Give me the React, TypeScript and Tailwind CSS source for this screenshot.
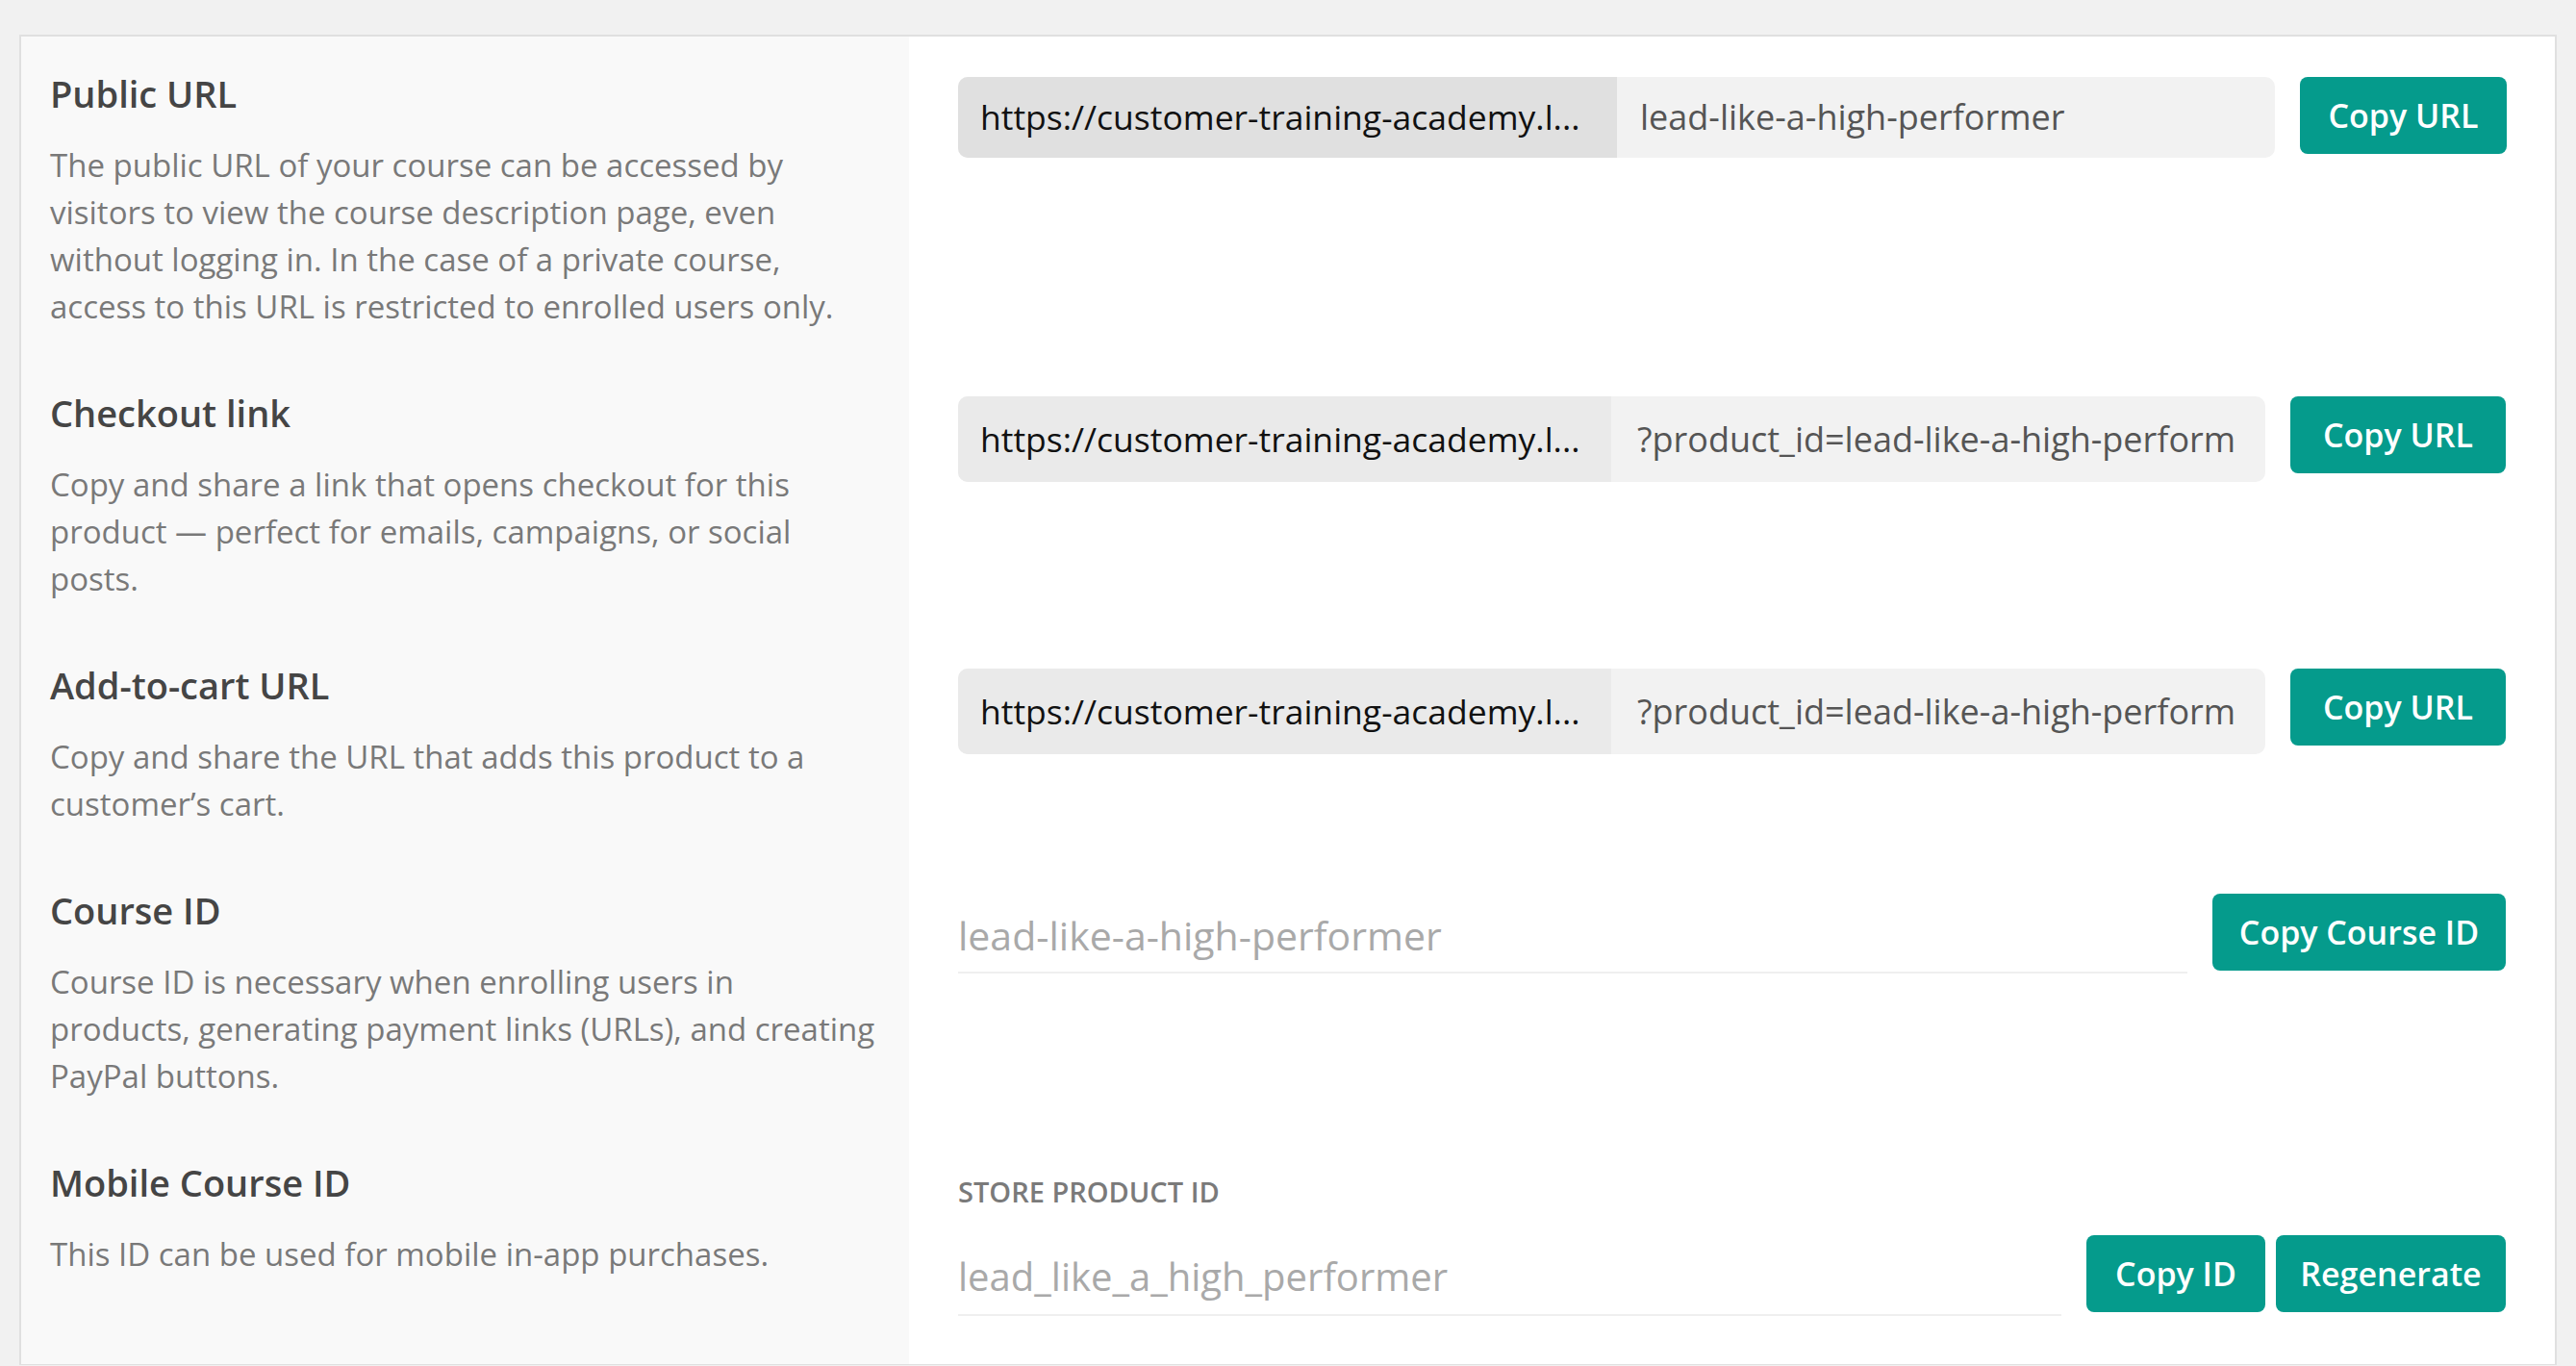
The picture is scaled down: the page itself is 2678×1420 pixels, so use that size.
import React from 'react';

const font = { fontFamily: '"Open Sans", "Noto Sans", sans-serif' };

type SectionProps = {
  title: string;
  lines: string[];
  rightClass: string;
  children: React.ReactNode;
};

const Section: React.FC<SectionProps> = ({ title, lines, rightClass, children }) => (
  <div className="flex">
    <div className="w-[923px] shrink-0 bg-[#f9f9f9] pl-[30px] pr-[24px] pt-[35px] pb-[27px]">
      <h2 className="text-[38px] leading-[48px] font-semibold text-[#454545] mb-[26px] whitespace-nowrap">
        {title}
      </h2>
      <p className="text-[33px] leading-[49px] text-[#797979]">
        {lines.map((line, i) => (
          <span key={i} className="block whitespace-nowrap">
            {line}
          </span>
        ))}
      </p>
    </div>
    <div className={`flex-1 min-w-0 bg-white pl-[51px] pr-[50px] ${rightClass}`}>{children}</div>
  </div>
);

const TealButton: React.FC<{ label: string; width: string }> = ({ label, width }) => (
  <button
    className={`${width} h-[80px] shrink-0 rounded-[8px] bg-[#059b8c] text-white text-[34px] font-semibold leading-none flex items-center justify-center`}
  >
    {label}
  </button>
);

const UrlGroup: React.FC<{
  prefix: string;
  suffix: string;
  prefixBg: string;
  prefixWidth: string;
  height: string;
  suffixPad: string;
}> = ({ prefix, suffix, prefixBg, prefixWidth, height, suffixPad }) => (
  <div className={`flex-1 min-w-0 flex ${height} rounded-[10px] overflow-hidden bg-[#f2f2f2]`}>
    <div
      className={`${prefixWidth} ${prefixBg} shrink-0 flex items-center pl-[23px] pr-[12px] overflow-hidden whitespace-nowrap text-[35.5px] text-[#111111]`}
    >
      {prefix}
    </div>
    <div
      className={`flex-1 min-w-0 flex items-center ${suffixPad} pr-[16px] whitespace-nowrap text-[36px] text-[#555555]`}
    >
      {suffix}
    </div>
  </div>
);

const App: React.FC = () => {
  const base = 'https://customer-training-academy.l...';
  // visible part of the query string, the field is scrolled to its start
  const query = '?product_id=lead-like-a-high-perform';

  return (
    <div className="min-h-screen bg-[#f1f1f1] pt-[36px] px-[20px]" style={font}>
      <div className="border-2 border-b border-[#e0e0e0] bg-white">
        {/* Public URL */}
        <Section
          title="Public URL"
          lines={[
            'The public URL of your course can be accessed by',
            'visitors to view the course description page, even',
            'without logging in. In the case of a private course,',
            'access to this URL is restricted to enrolled users only.',
          ]}
          rightClass="pt-[42px]"
        >
          <div className="flex items-start gap-[26px]">
            <UrlGroup
              prefix={base}
              suffix="lead-like-a-high-performer"
              prefixBg="bg-[#e0e0e0]"
              prefixWidth="w-[685px]"
              height="h-[84px]"
              suffixPad="pl-[24px]"
            />
            <TealButton label="Copy URL" width="w-[215px]" />
          </div>
        </Section>

        {/* Checkout link */}
        <Section
          title="Checkout link"
          lines={[
            'Copy and share a link that opens checkout for this',
            'product — perfect for emails, campaigns, or social',
            'posts.',
          ]}
          rightClass="pt-[42px]"
        >
          <div className="flex items-start gap-[26px] pr-[1px]">
            <UrlGroup
              prefix={base}
              suffix={query}
              prefixBg="bg-[#eaeaea]"
              prefixWidth="w-[679px]"
              height="h-[89px]"
              suffixPad="pl-[27px]"
            />
            <TealButton label="Copy URL" width="w-[224px]" />
          </div>
        </Section>

        {/* Add-to-cart URL */}
        <Section
          title="Add-to-cart URL"
          lines={['Copy and share the URL that adds this product to a', 'customer’s cart.']}
          rightClass="pt-[42px]"
        >
          <div className="flex items-start gap-[26px] pr-[1px]">
            <UrlGroup
              prefix={base}
              suffix={query}
              prefixBg="bg-[#eaeaea]"
              prefixWidth="w-[679px]"
              height="h-[89px]"
              suffixPad="pl-[27px]"
            />
            <TealButton label="Copy URL" width="w-[224px]" />
          </div>
        </Section>

        {/* Course ID */}
        <Section
          title="Course ID"
          lines={[
            'Course ID is necessary when enrolling users in',
            'products, generating payment links (URLs), and creating',
            'PayPal buttons.',
          ]}
          rightClass="pt-[42px]"
        >
          <div className="flex items-start gap-[26px] pr-[1px]">
            <div className="flex-1 min-w-0 h-[83px] pt-[5px] border-b-2 border-[#efefef]">
              <div className="leading-[76px] text-[41px] text-[#a9a9a9] whitespace-nowrap overflow-hidden">
                lead-like-a-high-performer
              </div>
            </div>
            <TealButton label="Copy Course ID" width="w-[305px]" />
          </div>
        </Section>

        {/* Mobile Course ID */}
        <Section
          title="Mobile Course ID"
          lines={['This ID can be used for mobile in-app purchases.']}
          rightClass="pt-[49px] pb-[50px]"
        >
          <div className="text-[29px] leading-[40px] font-semibold uppercase text-[#7a7a7a] mb-[25px]">
            Store Product ID
          </div>
          <div className="flex items-start pr-[1px]">
            <div className="flex-1 min-w-0 h-[84px] pt-[4px] border-b-2 border-[#efefef] mr-[26px]">
              <div className="leading-[78px] text-[40px] text-[#a9a9a9] whitespace-nowrap overflow-hidden">
                lead_like_a_high_performer
              </div>
            </div>
            <TealButton label="Copy ID" width="w-[186px]" />
            <div className="w-[11px] shrink-0" />
            <TealButton label="Regenerate" width="w-[239px]" />
          </div>
        </Section>
      </div>
    </div>
  );
};

export default App;
